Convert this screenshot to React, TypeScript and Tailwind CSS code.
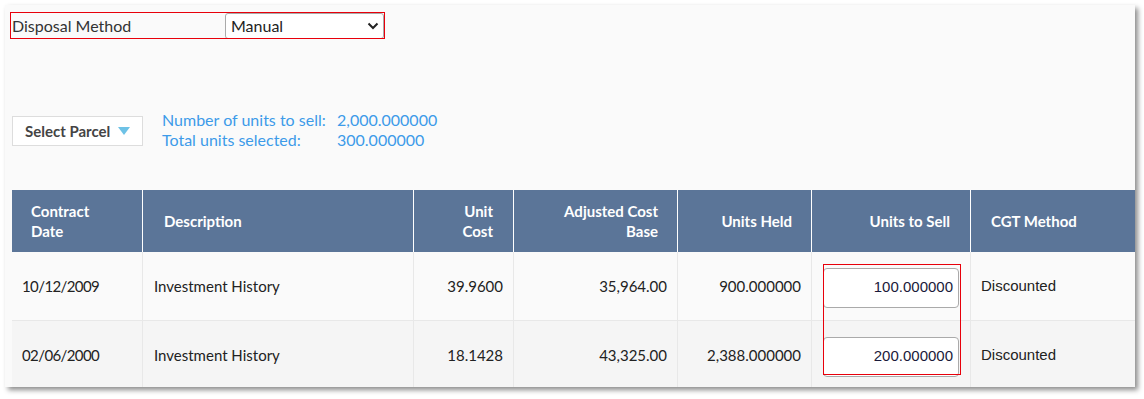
import React from "react";

const rows = [
  { date: "10/12/2009", desc: "Investment History", unit: "39.9600", acb: "35,964.00", held: "900.000000", sell: "100.000000", cgt: "Discounted", bg: "bg-[#fafafa]" },
  { date: "02/06/2000", desc: "Investment History", unit: "18.1428", acb: "43,325.00", held: "2,388.000000", sell: "200.000000", cgt: "Discounted", bg: "bg-[#f5f5f5]" },
];

const cols = "grid grid-cols-[131px_271px_100px_164px_134px_159px_164px]";

export default function App() {
  return (
    <div className="w-[1144px] h-[399px] bg-white overflow-hidden pt-[5px] pl-[5px]" style={{ fontFamily: "Lato, 'Open Sans', sans-serif" }}>
      <div className="relative w-[1130px] h-[382px] bg-[#fafafa] shadow-[3px_3px_5px_rgba(0,0,0,0.45)] overflow-hidden">
        {/* Disposal method row */}
        <div className="absolute left-[5px] top-[7px] w-[375px] h-[27px] border border-[#e8000b] pointer-events-none z-10" />
        <div className="flex items-center ml-[7px] pt-[7px] h-[34px]">
          <div className="w-[213px] text-[16px] text-[#333]">Disposal Method</div>
          <div className="w-[159px] h-[26px] border border-[#aaa] rounded-[3px] bg-white flex items-center justify-between pl-[5px] pr-[4px] text-[16px] text-[#222]">
            <span>Manual</span>
            <svg width="12" height="8" viewBox="0 0 12 8"><path d="M1.5 1.5 L6 6 L10.5 1.5" stroke="#222" strokeWidth="2" fill="none" /></svg>
          </div>
        </div>

        {/* Select parcel row */}
        <div className="flex items-start ml-[7px] mt-[71px]">
          <div className="mt-[6px] w-[131px] h-[30px] border border-[#ddd] bg-white flex items-center pl-[12px] text-[15px] font-bold text-[#444]">
            <span>Select Parcel</span>
            <svg className="ml-[8px]" width="12" height="8" viewBox="0 0 12 8"><path d="M0 0 H12 L6 8 Z" fill="#6ec2e6" /></svg>
          </div>
          <div className="ml-[19px] text-[16px] leading-[20px] text-[#3d9be9]">
            <div className="flex"><span className="w-[175px]">Number of units to sell:</span><span>2,000.000000</span></div>
            <div className="flex"><span className="w-[175px]">Total units selected:</span><span>300.000000</span></div>
          </div>
        </div>

        {/* Table */}
        <div className="ml-[7px] mt-[40px] w-[1123px]">
          <div className={`${cols} h-[62px] bg-[#5b7598] text-white font-bold text-[15px] leading-[20px]`}>
            <div className="flex items-center pl-[19px] border-r border-white">Contract<br />Date</div>
            <div className="flex items-center pl-[21px] border-r border-white">Description</div>
            <div className="flex items-center justify-end text-right pr-[20px] border-r border-white">Unit<br />Cost</div>
            <div className="flex items-center justify-end text-right pr-[19px] border-r border-white">Adjusted Cost<br />Base</div>
            <div className="flex items-center justify-end pr-[19px] border-r border-white">Units Held</div>
            <div className="flex items-center justify-end pr-[20px] border-r border-white">Units to Sell</div>
            <div className="flex items-center pl-[20px]">CGT Method</div>
          </div>
          {rows.map((r, i) => (
            <div key={i} className={`${cols} h-[69px] ${r.bg} border-b border-[#e8e8e8] text-[15px] text-[#222]`}>
              <div className="flex items-center pl-[10px] border-r border-[#e8e8e8] tracking-[-0.6px]">{r.date}</div>
              <div className="flex items-center pl-[11px] border-r border-[#e8e8e8]">{r.desc}</div>
              <div className="flex items-center justify-end pr-[10px] border-r border-[#e8e8e8]">{r.unit}</div>
              <div className="flex items-center justify-end pr-[10px] border-r border-[#e8e8e8]">{r.acb}</div>
              <div className="flex items-center justify-end pr-[10px] border-r border-[#e8e8e8]">{r.held}</div>
              <div className="flex items-center pl-[11px] border-r border-[#e8e8e8]">
                <div className="w-[136px] h-[40px] mt-[3px] bg-white border border-[#aaa] rounded-[4px] flex items-center justify-end pr-[5px] text-[15px] text-[#1a1a3a]" style={{ fontFamily: "'Liberation Sans', Arial, sans-serif" }}>{r.sell}</div>
              </div>
              <div className="flex items-center pl-[10px]" style={{ fontFamily: "'Liberation Sans', Arial, sans-serif" }}>{r.cgt}</div>
            </div>
          ))}
        </div>
        <div className="absolute left-[818px] top-[259px] w-[138px] h-[111px] border border-[#e8000b] pointer-events-none" />
      </div>
    </div>
  );
}
